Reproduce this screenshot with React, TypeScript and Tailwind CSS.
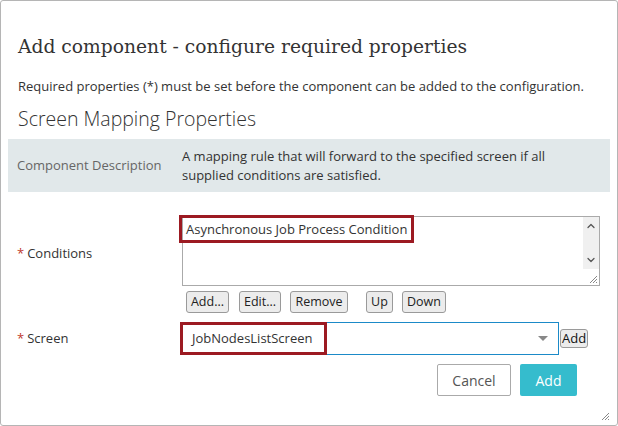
import { ChevronDown, ChevronUp } from "lucide-react";

const sans = "font-['Open_Sans',sans-serif]";

const SmallButton = ({ label, width }: { label: string; width: string }) => (
  <button
    className={`h-[22px] ${width} rounded-[3px] border border-[#9a9a9a] bg-[#ececec] text-[12.5px] leading-none text-[#222]`}
  >
    {label}
  </button>
);

const Grip = () => (
  <svg width="10" height="10" viewBox="0 0 10 10">
    <path d="M9 2L2 9M9 5L5 9M9 8L8 9" stroke="#888" strokeWidth="1" />
  </svg>
);

export default function App() {
  return (
    <div
      className={`relative flex h-[426px] w-[618px] flex-col rounded-[3px] border border-[#b5b5b5] bg-white text-[#333] ${sans}`}
    >
      <h1 className="ml-[17px] mt-[33px] font-['DejaVu_Serif',serif] text-[18.7px] leading-[26px] text-[#333]">
        Add component - configure required properties
      </h1>
      <p className="ml-[17px] mt-[17px] text-[13px] leading-[18px] text-[#333]">
        Required properties (*) must be set before the component can be added to the configuration.
      </p>
      <h2 className="ml-[17px] mt-[11px] text-[19.5px] font-light leading-[26px] text-[#333]">
        Screen Mapping Properties
      </h2>

      <div className="mx-[7px] mt-[7px] flex h-[53px] items-center bg-[#e1e8ea]">
        <div className="w-[174px] shrink-0 whitespace-nowrap pl-[9px] text-[13px] text-[#666]">
          Component Description
        </div>
        <div className="w-[375px] text-[13px] leading-[19px] text-[#333]">
          A mapping rule that will forward to the specified screen if all supplied conditions are satisfied.
        </div>
      </div>

      <div className="mt-[24px] flex">
        <div className="flex h-[70px] w-[181px] items-center pl-[16px] pt-[5px] text-[13px]">
          <span className="mr-[3px] text-[#c0392b]">*</span>Conditions
        </div>
        <div className="flex flex-col">
          <div className="relative flex h-[70px] w-[418px] border border-[#aaa]">
            <div className="flex-1">
              <div className="-ml-[4px] -mt-[2px] w-fit border-[3px] border-[#9c1a22] px-[4px] py-[2px] text-[13px] leading-[18px]">
                Asynchronous Job Process Condition
              </div>
            </div>
            <div className="flex h-[52px] w-[16px] flex-col items-center justify-between bg-[#f0f0f0] py-[3px]">
              <ChevronUp size={12} strokeWidth={2.5} className="text-[#555]" />
              <ChevronDown size={12} strokeWidth={2.5} className="text-[#555]" />
            </div>
            <div className="absolute bottom-[1px] right-[1px]">
              <Grip />
            </div>
          </div>
          <div className="mt-[5px] flex pl-[4px]">
            <SmallButton label="Add..." width="w-[43px]" />
            <div className="w-[10px]" />
            <SmallButton label="Edit..." width="w-[42px]" />
            <div className="w-[9px]" />
            <SmallButton label="Remove" width="w-[58px]" />
            <div className="w-[18px]" />
            <SmallButton label="Up" width="w-[27px]" />
            <div className="w-[9px]" />
            <SmallButton label="Down" width="w-[44px]" />
          </div>
        </div>
      </div>

      <div className="mt-[9px] flex items-center">
        <div className="flex w-[179px] items-center pl-[16px] text-[13px]">
          <span className="mr-[3px] text-[#c0392b]">*</span>Screen
        </div>
        <div className="relative flex h-[33px] w-[379px] items-center border border-[#1b8ac8]">
          <span className="-ml-px flex h-[33px] w-[147px] items-center border-[3px] border-[#9c1a22] pl-[9px] text-[13px]">
            JobNodesListScreen
          </span>
          <svg className="absolute right-[10px] top-[13px]" width="10" height="6" viewBox="0 0 10 6">
            <path d="M0 0H10L5 5Z" fill="#888" />
          </svg>
        </div>
        <button className="ml-px h-[19px] rounded-[3px] border border-[#9a9a9a] bg-[#ececec] px-[1px] text-[13px] leading-none text-[#111]">
          Add
        </button>
      </div>

      <div className="mr-[40px] mt-[9px] flex justify-end gap-[9px]">
        <button className="h-[32px] w-[74px] rounded-[2px] border border-[#aaa] bg-white text-[14px] text-[#555]">
          Cancel
        </button>
        <button className="h-[32px] w-[57px] rounded-[2px] bg-[#35bccd] text-[14px] text-white">Add</button>
      </div>

      <div className="absolute bottom-[4px] right-[7px]">
        <Grip />
      </div>
    </div>
  );
}
